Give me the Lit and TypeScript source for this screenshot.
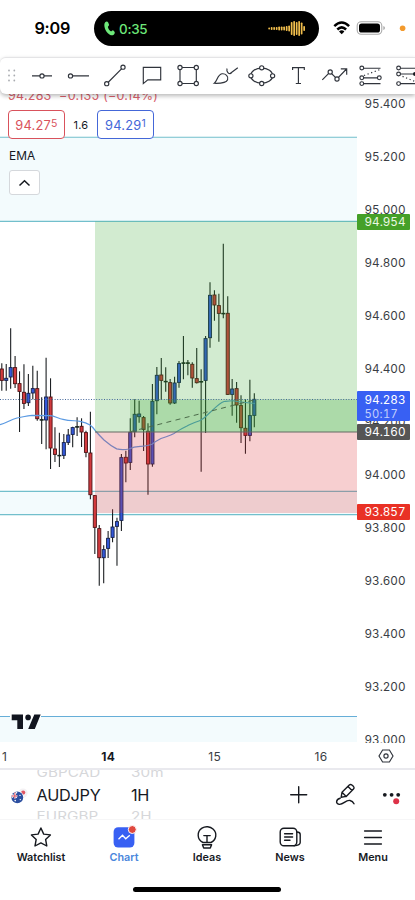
import { LitElement, html, css, svg } from "lit";
import { customElement } from "lit/decorators.js";
import { classMap } from "lit/directives/class-map.js";

// high, body top, body bottom, low, kind (u = up, d = down, n = flat)
type Candle = [number, number, number, number, string];

const CANDLES: Candle[] = [
  [363.3, 368.7, 380.7, 390.7, "d"], [364, 378, 380.7, 390.7, "u"], [328.3, 367.3, 377.3, 388.7, "u"],
  [356, 367.3, 384, 388, "d"], [371.3, 383.3, 391.7, 432, "d"], [364.3, 392, 403.7, 409, "d"],
  [374, 393, 403, 406, "u"], [365.7, 388.3, 393.3, 399.3, "u"], [370.7, 388.3, 419, 420.7, "d"],
  [397.3, 419.3, 420.3, 444, "n"], [357.7, 396.7, 420.3, 449.3, "u"], [378.3, 396.7, 448.3, 469, "d"],
  [427.3, 448.7, 454.7, 462, "d"], [432.7, 455, 456, 467, "n"], [434, 442.3, 455.7, 459, "u"],
  [429, 434.7, 442.7, 445, "u"], [426.7, 427.3, 434.7, 447.3, "u"], [417.3, 426.3, 427.3, 436, "n"],
  [418.3, 426, 432.3, 447, "d"], [430.7, 432.3, 452.7, 457.3, "d"], [411.7, 452.7, 495, 499.3, "d"],
  [495.3, 495.3, 527.7, 554, "d"], [525, 528.3, 558, 585.7, "d"], [545.3, 549.3, 558, 583.3, "u"],
  [531, 538, 548.7, 558, "u"], [509.3, 526.7, 537.7, 542.3, "u"], [517.7, 521.3, 526.7, 565.7, "u"],
  [454, 457.3, 520.7, 531, "u"], [450.7, 457, 463.3, 482.3, "d"], [418.3, 432, 462.7, 470, "u"],
  [399.3, 414, 432, 437.3, "u"], [400.7, 413.7, 417, 422.7, "u"], [416, 417.3, 429.7, 451, "d"],
  [423.3, 431, 464.3, 494.7, "d"], [384, 401, 464.3, 466.7, "u"], [367, 375, 401, 414.3, "u"],
  [358, 374.7, 380.7, 400, "d"], [367.3, 381, 382, 391.7, "n"], [379, 382.3, 403.3, 404.7, "d"],
  [376.7, 382.7, 403.3, 404, "u"], [361, 363.3, 382.7, 387.7, "u"], [336, 362.5, 363.5, 379.3, "n"],
  [360, 362.5, 363.5, 375.3, "n"], [362.3, 364, 378.3, 387.7, "d"], [348, 378.3, 383, 383.5, "d"],
  [369.3, 381.2, 382.3, 471.7, "n"], [336, 338.3, 380.7, 433, "u"], [282.3, 295, 338, 347.7, "u"],
  [290.3, 294.7, 305.3, 320.7, "d"], [293.7, 305.3, 313.7, 341.7, "d"], [243.7, 313, 314, 318.3, "n"],
  [296.3, 313, 394.7, 395, "d"], [379, 388.7, 394.7, 415.7, "u"], [382, 388.3, 405.3, 422.7, "d"],
  [395.3, 405.3, 428, 443, "d"], [399.3, 428, 435.7, 453.7, "d"], [379.7, 415.3, 435.7, 441.3, "u"],
  [393.3, 399, 415.7, 427.3, "u"],
];

const EMA =
  "M0 424.7C6 423 11 419.5 17 418C22 417.5 26 415.5 32 415.3L50 415.7C55 416 58 418.5 63 419.3C70 421 75 420.5 80 421.3C84 422 87 423 90 425C93 427 94 429 96 431.5C99 435 101 437 104 440C108 443.5 112 446.5 116.7 448.9C121 449.8 124 449.9 129 449C134 446.5 137 446.5 141 446.3C146 446.3 149 445.5 152 444.3C155 441.5 158 440 161 438.5C166 436.5 170 436 174 433.5C178 430.5 182 428.5 187 426C191 423.5 196 422 200 420.5C204 419 206 416 210 412.5C215 408 219 403.5 224 401.5C228 401 231 400.5 234 400.8C238 402 243 402.5 255 403.5";

@customElement("price-plot")
class PricePlot extends LitElement {
  static styles = css`
    :host { display: block; }
    svg { display: block; }
    .band { fill: #f3fbfd; }
    .level { stroke: #72bfcc; stroke-width: 1.1; }
    .low { stroke: #66aed8; }
    .wick { stroke: #1c1f22; stroke-width: 1.1; }
    .u { fill: #3458d8; stroke: #15204a; stroke-width: 0.9; }
    .d { fill: #d23a3e; stroke: #4c1214; stroke-width: 0.9; }
    .n { fill: #14231a; stroke: #14231a; stroke-width: 0.9; }
    .ema { fill: none; stroke: #5b9ae2; stroke-width: 1.2; }
    .target { fill: rgba(55, 165, 45, 0.225); }
    .gain { fill: rgba(55, 165, 45, 0.24); }
    .stop { fill: rgba(222, 56, 60, 0.24); }
    .entry { stroke: #656b62; stroke-width: 1.2; }
    .trend { stroke: #4c6b4a; stroke-width: 1; stroke-dasharray: 5 4.4; }
    .last { stroke: #44679a; stroke-width: 1; stroke-dasharray: 1 1.6; }
    .clear { fill: #fff; }
    .brand { fill: #11151f; }
  `;
  render() {
    return html`<svg width="357" height="649" viewBox="0 94 357 649">
      <rect class="band" y="137.5" width="357" height="84" />
      <rect class="band" y="491.3" width="357" height="23.5" />
      <rect class="band" y="716.5" width="357" height="25.5" />
      <path class="level" d="M0 137.3H357M0 221.4H357M0 491.4H357M0 514.6H357" />
      <path class="level low" d="M0 716.5H357" />
      ${CANDLES.map(([h, t, b, l, k], i) => {
        const x = 1.8 + i * 4.43;
        return svg`<path class="wick" d="M${x} ${h}V${l}"/><rect class=${k} x=${x - 1.55} y=${t + 0.3} width="3.1" height=${Math.max(0.6, b - t - 0.6)}/>`;
      })}
      <path class="ema" d=${EMA} />
      <rect class="target" x="95" y="221.5" width="262" height="210.5" />
      <rect class="gain" x="130" y="399.3" width="227" height="32.7" />
      <rect class="stop" x="95" y="432" width="262" height="81" />
      <path class="entry" d="M95 432H357" />
      <path class="trend" d="M130 431.8L254 400" />
      <path class="last" d="M0 399.5H357" />
      <rect class="clear" x="10" y="714" width="31" height="5" />
      <path class="brand" d="M11.7 714.6H23V729H17.3V720.3H11.7ZM34.3 714.6H40.7L34.8 729H28.2Z" />
      <circle class="brand" cx="28.1" cy="717.4" r="2.8" />
    </svg>`;
  }
}

@customElement("app-root")
class AppRoot extends LitElement {
  static styles = css`
    :host {
      display: flex; flex-direction: column; width: 415px; height: 900px; overflow: hidden;
      background: #fff; color: #16191f; font-family: Inter, "Liberation Sans", sans-serif; box-sizing: border-box;
    }
    * { box-sizing: border-box; }
    svg { display: block; flex: none; }
    .status { height: 57px; display: flex; align-items: flex-start; padding-top: 11px; flex: none; }
    .clock { width: 94px; padding-left: 34.5px; font-size: 16.2px; line-height: 35px; font-weight: 600; letter-spacing: -0.25px; color: #000; }
    .island { width: 225px; height: 35px; border-radius: 18px; background: #000; display: flex; align-items: center; padding: 0 12px 0 10px; }
    .call { color: #6ee87a; font-size: 13.4px; font-weight: 500; letter-spacing: -0.25px; margin-left: 4px; flex: 1; }
    .signals { margin: 3px 0 0 14px; }
    .tools {
      height: 37px; flex: none; position: relative; z-index: 2; border-top: 1px solid #e4e4e6; background: #fff;
      border-radius: 6px 0 0 6px; box-shadow: 0 2px 4px rgba(0, 0, 0, 0.28);
    }
    .ink { fill: none; stroke: #30343c; stroke-width: 1.15; }
    .knob { fill: #fff; stroke: #30343c; stroke-width: 1.15; }
    .grip { fill: #a9abb0; }
    .dots { fill: none; stroke: #30343c; stroke-width: 1.2; stroke-dasharray: 1.2 2.6; }
    .chart { height: 649px; flex: none; display: flex; position: relative; overflow: hidden; }
    .legend { position: absolute; left: 8px; top: -5px; }
    .change { color: #d8606b; font-size: 12.5px; line-height: 14px; letter-spacing: 0.25px; white-space: nowrap; }
    .quotes { display: flex; align-items: center; margin-top: 7px; }
    .quote { width: 57px; height: 29px; border: 1px solid #d9525c; border-radius: 4px; color: #d9525c; background: #fff; display: flex; justify-content: center; align-items: center; font-size: 12.8px; letter-spacing: 0.25px; padding-top: 1px; }
    .quote.ask { color: #4467d8; border-color: #4467d8; }
    .pip { font-size: 10.5px; margin-top: -3px; }
    .spread { width: 32px; text-align: center; font-size: 11px; letter-spacing: 0.2px; }
    .study { font-size: 11.9px; line-height: 15px; margin-top: 9px; padding-left: 1px; }
    .fold { width: 31px; height: 25px; border: 1px solid #d5d8dc; border-radius: 3px; background: #fff; margin: 7px 0 0 1px; display: flex; align-items: center; justify-content: center; }
    .fold path { fill: none; stroke: #16191f; stroke-width: 1.5; }
    .axis { width: 58px; position: relative; margin-top: -16px; height: 665px; overflow: hidden; font-variant-numeric: tabular-nums; }
    .price { height: 53px; line-height: 53px; padding-left: 7.5px; font-size: 11.7px; color: #3a3d44; }
    .tag { position: absolute; left: 0; width: 53px; padding-left: 7.5px; border-radius: 1px; font-size: 11.7px; line-height: 17px; color: #fff; }
    .tag.take { top: 135.5px; background: #45a028; color: #eaf8e2; height: 16px; }
    .tag.now { top: 313px; background: #3860f3; height: 30px; padding-top: 1.5px; line-height: 14px; }
    .tag.open { top: 346px; background: #555; height: 16px; }
    .tag.loss { top: 426px; background: #e93125; height: 16px; }
    .left { font-size: 11.2px; color: #c3cffc; letter-spacing: 0.3px; }
    .dates { height: 27px; flex: none; display: flex; align-items: center; border-bottom: 2px solid #e9e9ee; font-size: 12px; color: #3a3d44; padding-top: 1px; }
    .day { width: 106.4px; text-align: center; letter-spacing: 0.2px; }
    .day.first { width: 55px; text-align: left; padding-left: 2px; }
    .day.bold { font-weight: 700; color: #16191f; }
    .gear { margin-left: 4px; }
    .symbol { height: 50px; flex: none; display: flex; border-bottom: 1px solid #f6f6f7; }
    .flag { margin: 18px 0 0 10px; }
    .wheel { height: 49px; overflow: hidden; display: flex; flex-direction: column; justify-content: center; font-size: 16.3px; letter-spacing: -0.25px; }
    .wheel.pair { width: 94.5px; margin-left: 8.5px; }
    .wheel.frame { width: 155.5px; }
    .now-item { line-height: 26px; flex: none; }
    .ghost { line-height: 18px; flex: none; color: #d6d7da; font-size: 15.2px; letter-spacing: 0.1px; transform: scaleY(0.82); }
    .tabs { height: 59px; flex: none; display: flex; }
    .tab { flex: 1; display: flex; flex-direction: column; align-items: center; padding: 3.5px 1px 0 0; font-size: 10.8px; font-weight: 600; line-height: 14px; }
    .tab.on { color: #4a86dc; }
    .line { fill: none; stroke: #16191f; stroke-width: 1.4; stroke-linejoin: round; stroke-linecap: round; }
    .tile { fill: #3860f3; }
    .spark { fill: none; stroke: #fff; stroke-width: 1.3; }
    .alert { fill: #e0483e; stroke: #fff; stroke-width: 1; }
    .badge { fill: #dd3248; }
    .solid { fill: #16191f; }
    .home { width: 148px; height: 5px; border-radius: 3px; background: #000; margin: 8px 0 0 133px; flex: none; }
  `;

  private tab(label: string, icon: unknown, on = false) {
    return html`<div class=${classMap({ tab: true, on })}>
      <svg width="28" height="27" viewBox="0 0 28 27">${icon}</svg>${label}
    </div>`;
  }

  render() {
    const bars = [2, 3, 3, 3, 4, 4, 4, 5, 6, 13, 15, 13, 15, 12, 5];
    const prices = ["95.400", "95.200", "95.000", "94.800", "94.600", "94.400", "94.200", "94.000", "93.800", "93.600", "93.400", "93.200", "93.000"];
    return html`
      <div class="status">
        <div class="clock">9:09</div>
        <div class="island">
          <svg width="11" height="15" viewBox="0 0 11 15"><path fill="#6ee87a" d="M1.2 1.2C2.4 0 3.6.2 4.2 1.6L5 3.6C5.4 4.6 3.8 5.2 3.9 6.1C4.2 7.8 5.4 9.4 6.8 10.3C7.7 10.7 8.2 9 9.1 9.3L10.5 10.8C11.3 12 10.2 13.8 8.6 14.2C5.6 14.7 2.3 11.3 1 7.7C.1 5.1 0 2.6 1.2 1.2Z"/></svg>
          <div class="call">0:35</div>
          <svg width="39" height="17" viewBox="0 0 39 17">${bars.map((h, i) => svg`<rect x=${0.3 + i * 2.5} y=${8.5 - h / 2} width="1.7" height=${h} rx=".7" fill="#f0bd4c"/>`)}</svg>
        </div>
        <svg class="signals" width="82" height="28" viewBox="333 14 82 28">
          <g fill="none" stroke="#000" stroke-width="2.5"><path d="M334.3 26.1Q341.7 19 349.1 26.1M337.3 29.5Q341.7 25.2 346.1 29.5"/></g>
          <path d="M339 31.4Q341.7 29.3 344.4 31.4L341.7 34.2Z"/>
          <rect x="357.2" y="21.7" width="24.6" height="12.6" rx="4" fill="#fff" stroke="#a9a9a9" stroke-width="1.1"/>
          <rect x="359" y="23.5" width="21" height="9" rx="2.6"/><path d="M383.3 26V30Q385 29.5 385 28T383.3 26" fill="#aaa"/>
          <circle cx="402.6" cy="28.2" r="2.8" fill="#f39a2d"/>
        </svg>
      </div>
      <div class="tools">
        <svg width="415" height="36" viewBox="0 58 415 36">
          ${[9, 14.3].map((x) => [70.5, 75.5, 80.5].map((y) => svg`<circle class="grip" cx=${x} cy=${y} r=".9"/>`))}
          <path class="ink" d="M32 75.9H52M71 75.9H89M107 83.5L123 67.3M143.3 67.4H160.7V79.8H147.8L143.3 83.6ZM180 67.5H196.3V83.5H180Z"/>
          <circle class="knob" cx="42" cy="75.9" r="2.1"/><circle class="knob" cx="70.5" cy="75.9" r="2.1"/>
          <circle class="knob" cx="106.7" cy="83.7" r="2.1"/><circle class="knob" cx="123" cy="67.2" r="2.1"/>
          ${[[180, 67.5], [196.3, 67.5], [180, 83.5], [196.3, 83.5]].map(([x, y]) => svg`<circle class="knob" cx=${x} cy=${y} r="2.1"/>`)}
          <path class="ink" d="M214.3 83.3C217.5 80.8 217.3 74.6 222 73.8C225.6 73.3 228.8 76.5 227.6 79.8C226.3 83.2 221.3 83.5 214.3 83.3ZM227 68.5C226.3 71.6 228.5 74.5 231.5 73.3M229.8 73.7L237.8 67.8"/>
          <ellipse class="ink" cx="261.7" cy="75.7" rx="11" ry="7.6"/>
          ${[[261.7, 67.8], [261.7, 83.5], [250.9, 75.8], [272.6, 75.8]].map(([x, y]) => svg`<circle class="knob" cx=${x} cy=${y} r="2.1"/>`)}
          <path class="ink" d="M292.6 70V67.6H304.3V70M298.4 67.6V83.5M295.8 83.5H301M322.3 79.8L330 72L337 79L346.5 69M340.8 68.8H346.7V74.7"/>
          <circle class="knob" cx="330.2" cy="72" r="2.1"/><circle class="knob" cx="337" cy="79" r="2.1"/>
          <path class="ink" d="M362 68.2H380.5M362 77.8H379M362 83.6H380.5M399 68.2H415M399 74H415M399 83.6H415"/>
          <path class="dots" d="M364 75.5L380 69.5M399 75L415 81.5"/>
          ${[[361.8, 68], [361.8, 77.8], [379.3, 77.8], [361.8, 83.6], [398.6, 68], [398.6, 74], [398.6, 83.6]].map(([x, y]) => svg`<circle class="knob" cx=${x} cy=${y} r="1.9"/>`)}
          <circle class="solid" cx="415" cy="74" r="2"/>
        </svg>
      </div>
      <div class="chart">
        <price-plot></price-plot>
        <div class="axis">
          ${prices.map((p) => html`<div class="price">${p}</div>`)}
          <div class="tag take">94.954</div>
          <div class="tag now">94.283<div class="left">50:17</div></div>
          <div class="tag open">94.160</div>
          <div class="tag loss">93.857</div>
        </div>
        <div class="legend">
          <div class="change">94.283&nbsp; −0.135 (−0.14%)</div>
          <div class="quotes">
            <div class="quote">94.27<span class="pip">5</span></div>
            <div class="spread">1.6</div>
            <div class="quote ask">94.29<span class="pip">1</span></div>
          </div>
          <div class="study">EMA</div>
          <div class="fold"><svg width="13" height="8" viewBox="0 0 13 8"><path d="M1.5 6.5L6.5 1.7L11.5 6.5"/></svg></div>
        </div>
      </div>
      <div class="dates">
        <div class="day first">1</div><div class="day bold">14</div><div class="day">15</div><div class="day">16</div>
        <svg class="gear" width="16" height="14" viewBox="0 0 16 14"><path class="ink" d="M4.6 1H11.4L15 7L11.4 13H4.6L1 7Z"/><circle class="ink" cx="8" cy="7" r="2.1"/></svg>
      </div>
      <div class="symbol">
        <svg class="flag" width="18" height="17" viewBox="0 0 18 17">
          <circle cx="13" cy="5" r="4.6" fill="#f4f1f3"/><circle cx="13.2" cy="4.6" r="2.1" fill="#e05563"/>
          <circle cx="7.3" cy="9.4" r="6.6" fill="#fff"/><circle cx="7.3" cy="9.4" r="5.9" fill="#2c4fa0"/>
          <path d="M2.2 6.6L6.8 9.8M7 4.2L2 9.6" stroke="#fff" stroke-width="1.2"/><path d="M1.5 8H7.4M4.8 4.5V10.5" stroke="#fff" stroke-width="1.7"/><path d="M1.5 8H7.4M4.8 4.5V10.5" stroke="#da4555" stroke-width=".9"/>
          <g fill="#fff"><circle cx="10" cy="7.4" r=".7"/><circle cx="10.3" cy="11.6" r=".7"/><circle cx="5.2" cy="12.6" r=".8"/></g>
        </svg>
        <div class="wheel pair"><div class="ghost">GBPCAD</div><div class="now-item">AUDJPY</div><div class="ghost">EURGBP</div></div>
        <div class="wheel frame"><div class="ghost">30m</div><div class="now-item">1H</div><div class="ghost">2H</div></div>
        <svg width="128" height="49" viewBox="287 770 128 49">
          <path class="line" d="M290.7 794.8H306.7M298.7 786.8V802.8"/>
          <path class="line" d="M341.2 797.2L342 792.3L349.3 785.1Q350.5 784 351.9 785L353.6 786.6Q354.7 787.8 353.5 789.1L346.2 796.4L341.2 797.2ZM348 786.6L352 790.6M342 792.3L346.2 796.4M340.2 798.2C336 799.3 335.6 803.2 338.5 804.2C343 805.7 345.5 799.5 350 800.5Q352.8 801.2 354 803.8"/>
          <circle class="solid" cx="384.8" cy="794.8" r="1.9"/><circle class="solid" cx="391.6" cy="794.8" r="1.9"/><circle class="solid" cx="398.2" cy="794.8" r="1.9"/>
          <circle class="badge" cx="396.2" cy="801.3" r="3"/>
        </svg>
      </div>
      <div class="tabs">
        ${this.tab("Watchlist", svg`<path class="line" d="M13.9 4L16.7 10.1L23.4 10.9L18.6 15.4L19.8 22L13.9 18.9L8 22L9.2 15.4L4.4 10.9L11.1 10.1Z"/>`)}
        ${this.tab("Chart", svg`<rect class="tile" x="3.6" y="3.2" width="20.8" height="20.3" rx="4.6"/><path class="spark" d="M8.5 15.3L12.5 11.3L15.7 14.8L19.8 11.2"/><circle class="alert" cx="22.3" cy="5.5" r="4"/>`, true)}
        ${this.tab("Ideas", svg`<path class="line" d="M10 18.5C3.8 15.4 3.7 7.5 9 4.1C12.4 1.9 17.2 2.4 20 5C24.7 9.2 23.2 16 18 18.5ZM9.4 20.8H18.6L17.3 24H10.7ZM10.8 11.6H17.2M14 11.6V18.5"/>`)}
        ${this.tab("News", svg`<rect class="line" x="4.2" y="4.2" width="16.6" height="17.6" rx="3.8"/><path class="line" d="M20.8 8C23 8 24.2 8.6 24.2 10.5V18.6C24.2 20.5 22.8 21.5 18 21.8M8.6 9.8H16.6M8.6 13H16.6M8.6 16.2H14"/>`)}
        ${this.tab("Menu", svg`<path class="line" d="M5.6 7H22.4M5.6 13.5H22.4M5.6 20H22.4"/>`)}
      </div>
      <div class="home"></div>`;
  }
}
